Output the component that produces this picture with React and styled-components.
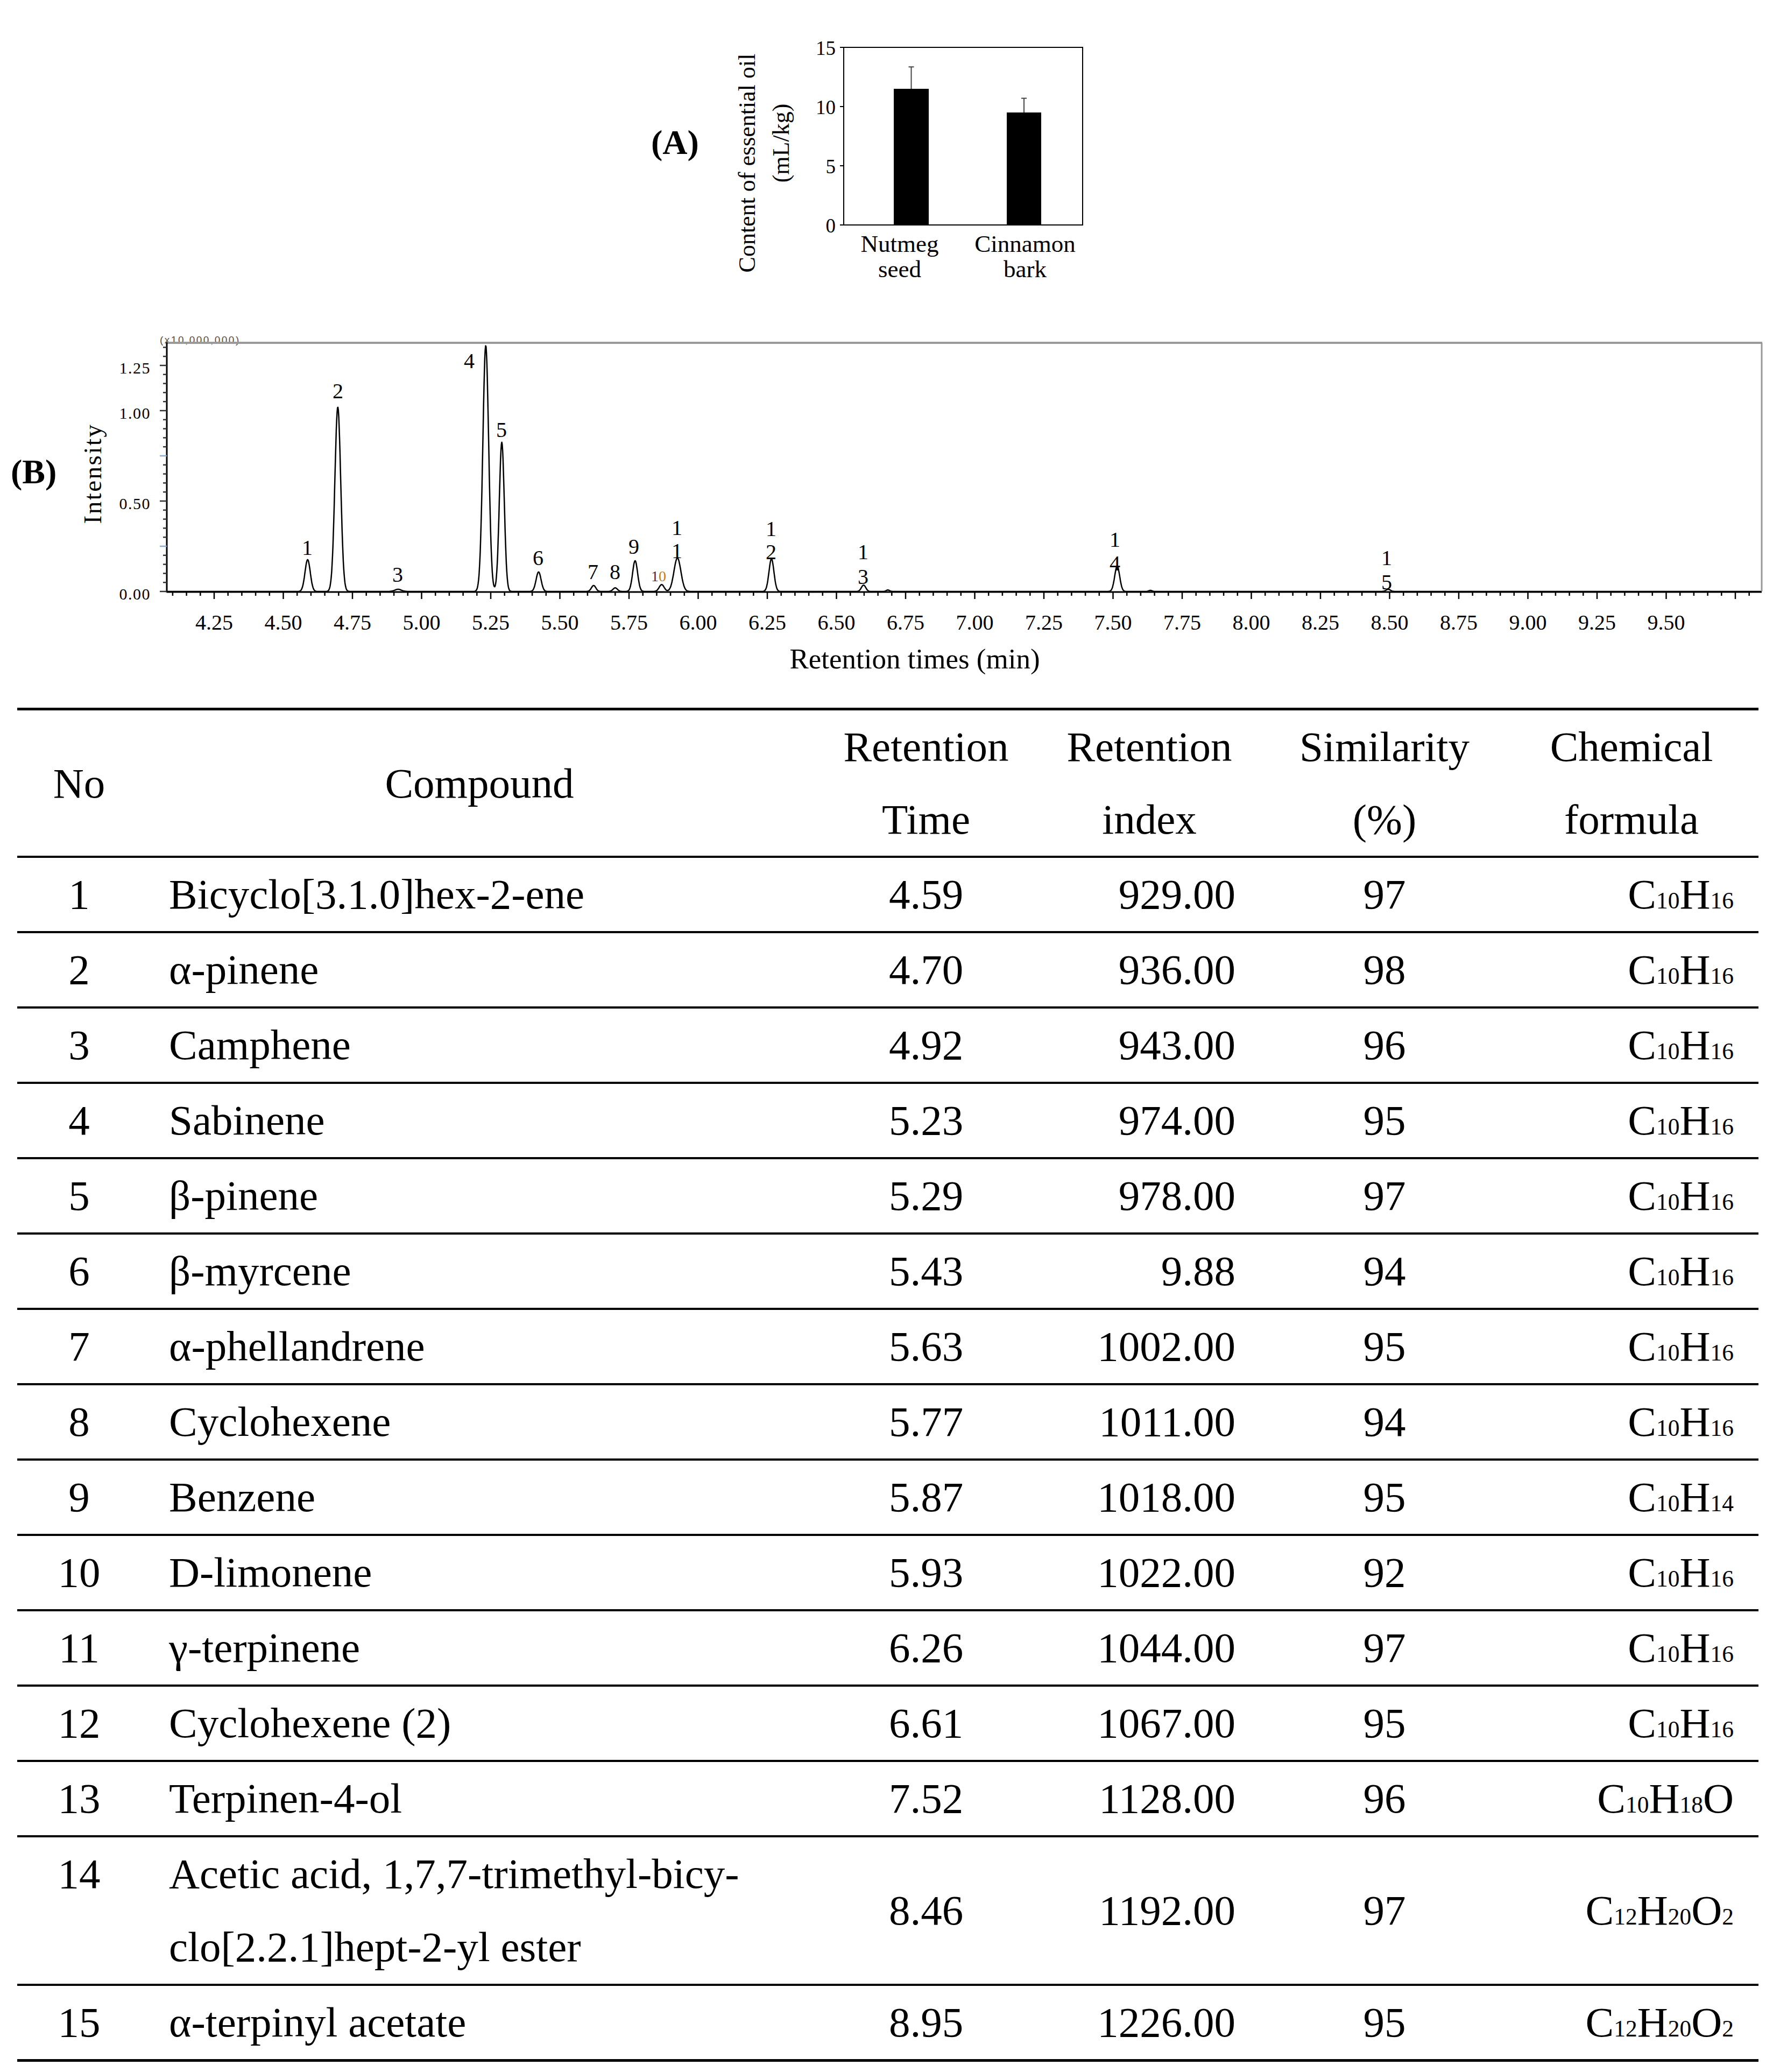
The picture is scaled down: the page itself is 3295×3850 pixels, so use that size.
import React from "react";
import styled, { createGlobalStyle } from "styled-components";

const GlobalStyle = createGlobalStyle`
    body {
        margin: 0;
        background: #fff;
        font-family: "Liberation Serif", "Times New Roman", serif;
        color: #000;
    }
`;

const Page = styled.div`
    width: 3295px;
`;

const FigureRow = styled.div`
    display: flex;
    align-items: flex-start;
    height: ${(p) => p.h}px;
    padding-left: ${(p) => p.indent}px;
`;

const PanelLabel = styled.div`
    flex-shrink: 0;
    width: ${(p) => p.w}px;
    margin-top: ${(p) => p.top}px;
    font-size: 64px;
    font-weight: bold;
    line-height: 1;
`;

const ChartSvg = styled.svg`
    display: block;
    flex-shrink: 0;
    font-family: "Liberation Serif", "Times New Roman", serif;
    text {
        fill: #000;
    }
`;

const Table = styled.div`
    width: 3236px;
    margin: 15px 0 0 32px;
    border-top: 5px solid #000;
    font-size: 79px;
    line-height: 136px;
`;

const Row = styled.div`
    display: grid;
    grid-template-columns: 230px 1258px 402px 428px 446px 472px;
    align-items: center;
    border-bottom: ${(p) => (p.last ? 5 : 4)}px solid #000;
`;

const HeadRow = styled(Row)`
    line-height: 135px;
`;

const Cell = styled.div`
    white-space: nowrap;
    text-align: ${(p) => p.align || "center"};
    padding-left: ${(p) => p.pl || 0}px;
    padding-right: ${(p) => p.pr || 0}px;
    align-self: ${(p) => (p.top ? "start" : "auto")};
`;

const Sub = styled.span`
    font-size: 0.55em;
    line-height: 0;
`;

/* ---------- chart A: essential oil content ---------- */

const A_Y0 = 418;
const A_PER = 22;
const ay = (v) => A_Y0 - v * A_PER;

const bars = [
    { x: 1661, w: 65, v: 11.5, err: 13.35, label: ["Nutmeg", "seed"], lx: 1672 },
    { x: 1871, w: 64, v: 9.5, err: 10.7, label: ["Cinnamon", "bark"], lx: 1905 },
];

const ChartA = () => (
    <ChartSvg width="720" height="600" viewBox="1330 0 720 600">
        <text transform="translate(1403,303) rotate(-90)" textAnchor="middle" fontSize="44">
            Content of essential oil
        </text>
        <text transform="translate(1466,266) rotate(-90)" textAnchor="middle" fontSize="44">
            (mL/kg)
        </text>
        <rect x="1568" y="88" width="444" height="330" fill="none" stroke="#000" strokeWidth="2" />
        {[15, 10, 5, 0].map((v) => (
            <g key={v}>
                <line x1="1561" x2="1568" y1={ay(v)} y2={ay(v)} stroke="#000" strokeWidth="2" />
                <text x="1553" y={ay(v) + 14} textAnchor="end" fontSize="37">
                    {v}
                </text>
            </g>
        ))}
        {bars.map((b) => {
            const cx = b.x + b.w / 2;
            return (
                <g key={b.label[0]}>
                    <rect x={b.x} y={ay(b.v)} width={b.w} height={A_Y0 - ay(b.v)} fill="#000" />
                    <line x1={cx} x2={cx} y1={ay(b.v)} y2={ay(b.err)} stroke="#444" strokeWidth="2" />
                    <line x1={cx - 5} x2={cx + 5} y1={ay(b.err)} y2={ay(b.err)} stroke="#444" strokeWidth="2" />
                    <text x={b.lx} y="468" textAnchor="middle" fontSize="45">
                        {b.label[0]}
                    </text>
                    <text x={b.lx} y="515" textAnchor="middle" fontSize="45">
                        {b.label[1]}
                    </text>
                </g>
            );
        })}
    </ChartSvg>
);

/* ---------- chart B: chromatogram ---------- */

const X0 = 398;
const PX = 514;
const Y0 = 1099;
const PY = 336;
const tx = (t) => X0 + (t - 4.25) * PX;
const vy = (v) => Y0 - v * PY;
const LEFT = 310;
const RIGHT = 3274;
const TOP = 637;

const peaks = [
    { t: 4.588, h: 0.176, s: 0.0095 },
    { t: 4.697, h: 1.02, s: 0.0105 },
    { t: 4.915, h: 0.012, s: 0.012 },
    { t: 5.232, h: 1.36, s: 0.0105 },
    { t: 5.29, h: 0.825, s: 0.009 },
    { t: 5.423, h: 0.108, s: 0.009 },
    { t: 5.622, h: 0.033, s: 0.008 },
    { t: 5.7, h: 0.02, s: 0.008 },
    { t: 5.772, h: 0.17, s: 0.009 },
    { t: 5.868, h: 0.038, s: 0.009 },
    { t: 5.925, h: 0.185, s: 0.0125 },
    { t: 6.265, h: 0.18, s: 0.009 },
    { t: 6.598, h: 0.035, s: 0.008 },
    { t: 6.686, h: 0.008, s: 0.006 },
    { t: 7.515, h: 0.14, s: 0.009 },
    { t: 7.635, h: 0.006, s: 0.006 },
    { t: 8.495, h: 0.012, s: 0.008 },
];

const signal = (t) =>
    peaks.reduce((sum, p) => {
        const d = (t - p.t) / p.s;
        return Math.abs(d) > 6 ? sum : sum + p.h * Math.exp(-0.5 * d * d);
    }, 0);

const tracePath = (() => {
    const pts = [];
    for (let t = 4.081; t <= 9.844; t += 0.0015) {
        pts.push(`${tx(t).toFixed(1)},${vy(signal(t)).toFixed(1)}`);
    }
    return "M" + pts.join("L");
})();

const xTicks = [];
for (let i = 0; i <= 114; i++) {
    const t = 4.1 + i * 0.05;
    const major = Math.abs(t * 4 - Math.round(t * 4)) < 1e-6;
    xTicks.push({ t, major });
}

const yTicks = [];
for (let i = 0; i <= 27; i++) {
    const v = i * 0.05;
    const major = Math.abs(v * 4 - Math.round(v * 4)) < 1e-6;
    yTicks.push({ v, major, blue: major && (i === 5 || i === 15) });
}

const xLabels = [];
for (let i = 0; i <= 21; i++) xLabels.push((4.25 + i * 0.25).toFixed(2));

const peakLabels = [
    { x: 571, lines: [["1", 1031]] },
    { x: 628, lines: [["2", 740]] },
    { x: 739, lines: [["3", 1081]] },
    { x: 872, lines: [["4", 684]] },
    { x: 932, lines: [["5", 812]] },
    { x: 1000, lines: [["6", 1050]] },
    { x: 1102, lines: [["7", 1076]] },
    { x: 1143, lines: [["8", 1076]] },
    { x: 1178, lines: [["9", 1029]] },
    { x: 1258, lines: [["1", 994], ["1", 1037]] },
    { x: 1433, lines: [["1", 996], ["2", 1039]] },
    { x: 1604, lines: [["1", 1039], ["3", 1085]] },
    { x: 2072, lines: [["1", 1016], ["4", 1060]] },
    { x: 2577, lines: [["1", 1050], ["5", 1095]] },
];

const ChartB = () => (
    <ChartSvg width="3155" height="700" viewBox="140 600 3155 700">
        <text x="297" y="638" fontSize="19" letterSpacing="2.5" fontFamily="Liberation Sans, sans-serif" style={{ fill: "#5c4a3a" }}>
            (x10,000,000)
        </text>
        <line x1={LEFT} x2={RIGHT + 1} y1={TOP} y2={TOP} stroke="#9a9a9a" strokeWidth="4" />
        <line x1={RIGHT} x2={RIGHT} y1={TOP} y2={Y0} stroke="#9a9a9a" strokeWidth="3" />
        <line x1={LEFT} x2={LEFT} y1={TOP - 1} y2={Y0 + 2} stroke="#000" strokeWidth="3" />
        <line x1={LEFT} x2={RIGHT} y1={Y0 + 1} y2={Y0 + 1} stroke="#000" strokeWidth="3" />
        {yTicks.map((k) => (
            <line
                key={k.v}
                x1={LEFT - (k.major ? 13 : 7)}
                x2={LEFT}
                y1={vy(k.v)}
                y2={vy(k.v)}
                stroke={k.blue ? "#7fb0dc" : "#333"}
                strokeWidth="2.5"
            />
        ))}
        {xTicks.map((k) => (
            <line
                key={k.t}
                x1={tx(k.t)}
                x2={tx(k.t)}
                y1={Y0 + 1}
                y2={Y0 + (k.major ? 14 : 8)}
                stroke="#000"
                strokeWidth="2.5"
            />
        ))}
        {[1.25, 1.0, 0.5, 0].map((v) => (
            <text key={v} x="280" y={vy(v) + 15} textAnchor="end" fontSize="30" letterSpacing="1.5">
                {v.toFixed(2)}
            </text>
        ))}
        {xLabels.map((l) => (
            <text key={l} x={tx(parseFloat(l))} y="1170" textAnchor="middle" fontSize="40">
                {l}
            </text>
        ))}
        <path d={tracePath} fill="none" stroke="#000" strokeWidth="2.5" strokeLinejoin="round" />
        {peakLabels.map((p) =>
            p.lines.map(([s, y], i) => (
                <text key={`${p.x}-${i}`} x={p.x} y={y} textAnchor="middle" fontSize="40">
                    {s}
                </text>
            ))
        )}
        <text x="1224" y="1080" textAnchor="middle" fontSize="28">
            <tspan style={{ fill: "#5a1f33" }}>1</tspan>
            <tspan style={{ fill: "#c97a1c" }}>0</tspan>
        </text>
        <text transform="translate(188,880) rotate(-90)" textAnchor="middle" fontSize="47" letterSpacing="2.5">
            Intensity
        </text>
        <text x="1700" y="1242" textAnchor="middle" fontSize="53">
            Retention times (min)
        </text>
    </ChartSvg>
);

/* ---------- table ---------- */

const cols = [
    { align: "center", top: true },
    { align: "left", pl: 52, top: true },
    { align: "center" },
    { align: "right", pr: 54 },
    { align: "center" },
    { align: "right", pr: 46 },
];

const rows = [
    ["1", "Bicyclo[3.1.0]hex-2-ene", "4.59", "929.00", "97", "C10H16"],
    ["2", "α-pinene", "4.70", "936.00", "98", "C10H16"],
    ["3", "Camphene", "4.92", "943.00", "96", "C10H16"],
    ["4", "Sabinene", "5.23", "974.00", "95", "C10H16"],
    ["5", "β-pinene", "5.29", "978.00", "97", "C10H16"],
    ["6", "β-myrcene", "5.43", "9.88", "94", "C10H16"],
    ["7", "α-phellandrene", "5.63", "1002.00", "95", "C10H16"],
    ["8", "Cyclohexene", "5.77", "1011.00", "94", "C10H16"],
    ["9", "Benzene", "5.87", "1018.00", "95", "C10H14"],
    ["10", "D-limonene", "5.93", "1022.00", "92", "C10H16"],
    ["11", "γ-terpinene", "6.26", "1044.00", "97", "C10H16"],
    ["12", "Cyclohexene (2)", "6.61", "1067.00", "95", "C10H16"],
    ["13", "Terpinen-4-ol", "7.52", "1128.00", "96", "C10H18O"],
    ["14", "Acetic acid, 1,7,7-trimethyl-bicy-\nclo[2.2.1]hept-2-yl ester", "8.46", "1192.00", "97", "C12H20O2"],
    ["15", "α-terpinyl acetate", "8.95", "1226.00", "95", "C12H20O2"],
];

const Formula = ({ text }) => (
    <>
        {text.split(/(\d+)/).map((part, i) =>
            /^\d+$/.test(part) ? <Sub key={i}>{part}</Sub> : <React.Fragment key={i}>{part}</React.Fragment>
        )}
    </>
);

const Multiline = ({ text }) =>
    text.split("\n").map((line, i) => (
        <React.Fragment key={i}>
            {i > 0 && <br />}
            {line}
        </React.Fragment>
    ));

const headers = [
    "No",
    "Compound",
    "Retention\nTime",
    "Retention\nindex",
    "Similarity\n(%)",
    "Chemical\nformula",
];

const CompoundTable = () => (
    <Table>
        <HeadRow>
            {headers.map((h) => (
                <Cell key={h}>
                    <Multiline text={h} />
                </Cell>
            ))}
        </HeadRow>
        {rows.map((r, ri) => (
            <Row key={r[0]} last={ri === rows.length - 1}>
                {r.map((v, ci) => (
                    <Cell key={ci} {...cols[ci]}>
                        {ci === 5 ? <Formula text={v} /> : <Multiline text={v} />}
                    </Cell>
                ))}
            </Row>
        ))}
    </Table>
);

const App = () => (
    <>
        <GlobalStyle />
        <Page>
            <FigureRow h={600} indent={1210}>
                <PanelLabel w={120} top={233}>
                    (A)
                </PanelLabel>
                <ChartA />
            </FigureRow>
            <FigureRow h={700} indent={20}>
                <PanelLabel w={120} top={245}>
                    (B)
                </PanelLabel>
                <ChartB />
            </FigureRow>
            <CompoundTable />
        </Page>
    </>
);

export default App;
